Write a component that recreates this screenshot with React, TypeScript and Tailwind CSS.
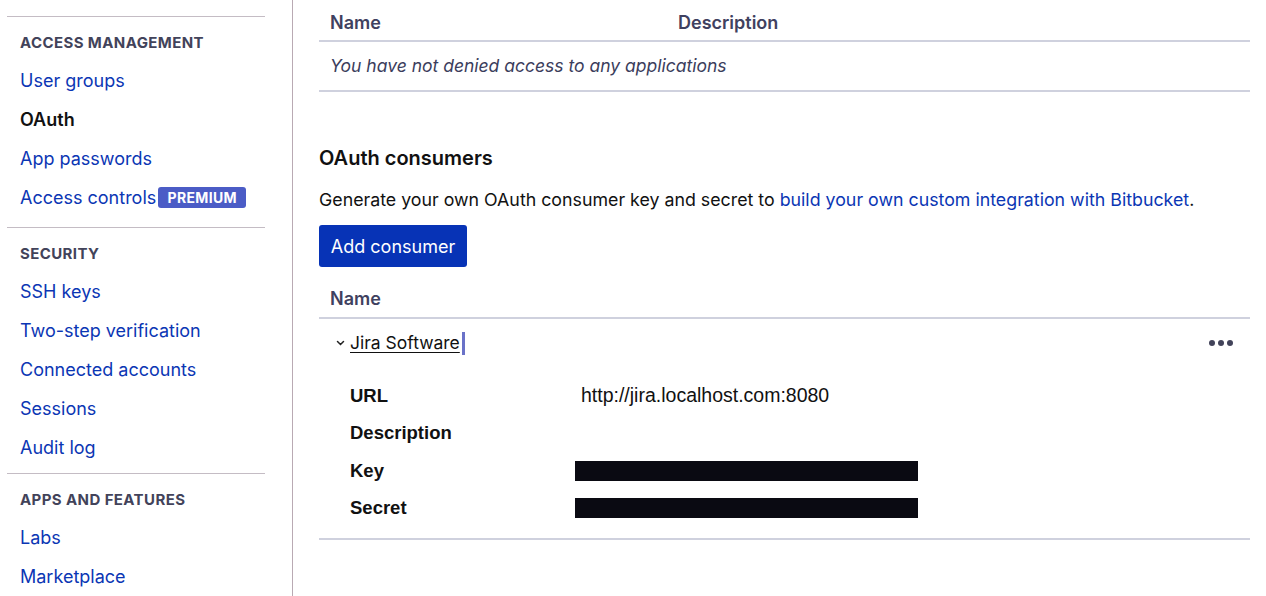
import React from 'react';

const sections = [
  {
    title: 'Access management',
    items: ['User groups', 'OAuth', 'App passwords', 'Access controls'],
    pb: 'pb-[10px]',
  },
  {
    title: 'Security',
    items: ['SSH keys', 'Two-step verification', 'Connected accounts', 'Sessions', 'Audit log'],
    pb: 'pb-[6px]',
  },
  {
    title: 'Apps and features',
    items: ['Labs', 'Marketplace'],
    pb: 'pb-[6px]',
  },
];

const details = [
  { label: 'URL', value: 'http://jira.localhost.com:8080' },
  { label: 'Description', value: '' },
  { label: 'Key', value: null },
  { label: 'Secret', value: null },
];

const Sidebar: React.FC = () => (
  <aside className="w-[293px] shrink-0 border-r border-[#b9aab3] pl-[7px] pr-[27px] pt-[16px]">
    {sections.map((section) => (
      <div key={section.title} className={`border-t border-[#c4bcc4] pt-[16px] ${section.pb}`}>
        <h3 className="h-[20px] pl-[13px] text-[15px] font-bold uppercase leading-[20px] tracking-[0.4px] text-[#42435a]">
          {section.title}
        </h3>
        <ul className="mt-[8px]">
          {section.items.map((item) => (
            <li key={item} className="flex h-[39px] items-center pl-[13px] text-[18px]">
              {item === 'OAuth' ? (
                <span className="font-semibold text-[#111]">{item}</span>
              ) : (
                <span className="text-[#0b36b4]">{item}</span>
              )}
              {item === 'Access controls' && (
                <span className="ml-[2px] flex h-[21px] w-[88px] items-center justify-center rounded-[3px] bg-[#4b5cc6] text-[14px] font-bold tracking-wide text-white">
                  PREMIUM
                </span>
              )}
            </li>
          ))}
        </ul>
      </div>
    ))}
  </aside>
);

const Chevron: React.FC = () => (
  <svg width="9" height="6" viewBox="0 0 9 6" className="mr-[5px]">
    <path d="M1.5 1.5 L4.5 4.5 L7.5 1.5" fill="none" stroke="#222" strokeWidth="1.5" strokeLinecap="round" />
  </svg>
);

export default function App() {
  return (
    <div className="flex h-[596px] w-[1266px] overflow-hidden bg-white font-['Inter',sans-serif] text-[#172b4d]">
      <Sidebar />
      <main className="flex-1 pl-[26px] pr-[16px]">
        {/* denied applications table */}
        <div className="flex h-[42px] items-center border-b-2 border-[#cfd1de] pt-[4px] text-[18px] font-semibold text-[#3f4160]">
          <span className="w-[359px] pl-[11px]">Name</span>
          <span>Description</span>
        </div>
        <div className="flex h-[50px] items-center border-b-2 border-[#cfd1de] pl-[11px] text-[17.5px] italic text-[#3b3d5c]">
          You have not denied access to any applications
        </div>

        <h2 className="mt-[53px] text-[20px] font-semibold leading-[26px] text-[#111]">OAuth consumers</h2>
        <p className="mt-[16px] text-[17.8px] leading-[26px] text-[#111]">
          Generate your own OAuth consumer key and secret to{' '}
          <span className="text-[#0b36b4]">build your own custom integration with Bitbucket</span>.
        </p>
        <button className="mt-[12px] h-[42px] w-[148px] rounded-[3px] bg-[#0733b6] text-[18px] text-white">
          Add consumer
        </button>

        {/* consumers table */}
        <div className="mt-[12px] flex h-[40px] items-center border-b-2 border-[#cfd1de] pl-[11px] text-[18px] font-semibold text-[#3f4160]">
          Name
        </div>
        <div className="border-b-2 border-[#cfd1de] pb-[11px]">
          <div className="flex h-[48px] items-center pl-[17px] pr-[17px]">
            <Chevron />
            <span className="text-[17.5px] text-[#111] underline underline-offset-[3px]">Jira Software</span>
            <span className="ml-[2px] h-[23px] w-[3px] bg-[#6a72c8]" />
            <span className="ml-auto flex gap-[3px]">
              <span className="h-[6px] w-[6px] rounded-full bg-[#42435a]" />
              <span className="h-[6px] w-[6px] rounded-full bg-[#42435a]" />
              <span className="h-[6px] w-[6px] rounded-full bg-[#42435a]" />
            </span>
          </div>
          <dl className="mt-[10px] pl-[31px] font-['Liberation_Sans',sans-serif]">
            {details.map((d) => (
              <div key={d.label} className="flex h-[37.5px] items-center">
                <dt className="w-[225px] text-[18.5px] font-bold text-[#111]">{d.label}</dt>
                <dd className="text-[19.5px] text-[#111]">
                  {d.value === null ? (
                    <span className="block h-[20px] w-[343px] bg-[#0a0a12]" />
                  ) : (
                    <span className="pl-[6px]">{d.value}</span>
                  )}
                </dd>
              </div>
            ))}
          </dl>
        </div>
      </main>
    </div>
  );
}
